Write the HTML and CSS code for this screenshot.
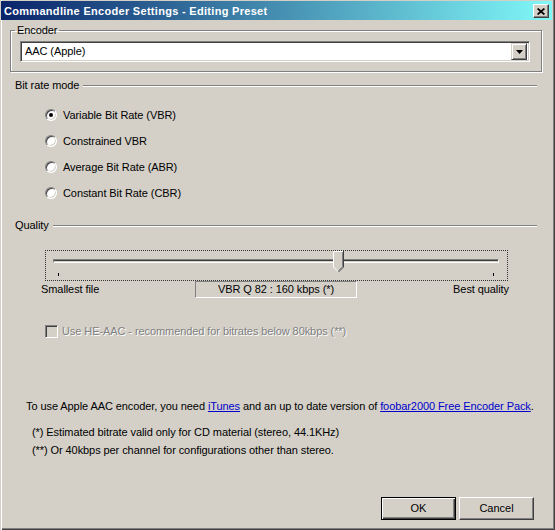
FILE: index.html
```html
<!DOCTYPE html>
<html>
<head>
<meta charset="utf-8">
<title>Commandline Encoder Settings</title>
<link rel="stylesheet" href="styles.css">
</head>
<body>
<div class="window">
  <div class="titlebar">
    <span class="title">Commandline Encoder Settings - Editing Preset</span>
    <span class="closebtn"><svg width="8" height="7" viewBox="0 0 8 7"><path d="M0.6 0.5 L7.4 6.5 M7.4 0.5 L0.6 6.5" stroke="#000" stroke-width="1.7" fill="none"/></svg></span>
  </div>

  <fieldset class="group">
    <legend>Encoder</legend>
    <div class="combo">
      <span class="combo-text">AAC (Apple)</span>
      <span class="combo-btn"><svg width="7" height="4" viewBox="0 0 7 4"><path d="M0 0H7L3.5 4Z" fill="#000"/></svg></span>
    </div>
  </fieldset>

  <div class="sect sect-bitrate"><span>Bit rate mode</span><i class="rule"></i></div>
  <div class="radios">
    <label class="radio"><span class="rb on"></span>Variable Bit Rate (VBR)</label>
    <label class="radio"><span class="rb"></span>Constrained VBR</label>
    <label class="radio"><span class="rb"></span>Average Bit Rate (ABR)</label>
    <label class="radio"><span class="rb"></span>Constant Bit Rate (CBR)</label>
  </div>

  <div class="sect sect-quality"><span>Quality</span><i class="rule"></i></div>
  <div class="slider">
    <div class="track"></div>
    <svg class="thumb" style="left:287px" width="11" height="22" viewBox="0 0 11 22">
      <path d="M0 0H11V16L5.5 21.5L0 16Z" fill="#d4d0c8"/>
      <path d="M0.5 16V0.5H10" stroke="#fff" fill="none"/>
      <path d="M0.5 16L5 20.5" stroke="#fff" fill="none"/>
      <path d="M10.5 0V16L5.5 21" stroke="#404040" fill="none"/>
      <path d="M9.5 1V15.6L5.5 19.6" stroke="#808080" fill="none"/>
    </svg>
    <i class="tick tick-min"></i>
    <i class="tick tick-max"></i>
  </div>
  <div class="slider-labels">
    <span>Smallest file</span>
    <span class="value">VBR Q 82 : 160 kbps (*)</span>
    <span class="right">Best quality</span>
  </div>

  <label class="check"><span class="cb"></span>Use HE-AAC - recommended for bitrates below 80kbps (**)</label>

  <p class="info">To use Apple AAC encoder, you need <a href="#">iTunes</a> and an up to date version of <a href="#">foobar2000 Free Encoder Pack</a>.</p>
  <p class="note note-1">(*) Estimated bitrate valid only for CD material (stereo, 44.1KHz)</p>
  <p class="note note-2">(**) Or 40kbps per channel for configurations other than stereo.</p>

  <div class="buttons">
    <button class="btn default">OK</button>
    <button class="btn">Cancel</button>
  </div>
</div>
</body>
</html>
```

FILE: styles.css
```css
html, body {
  margin: 0;
  padding: 0;
}
body {
  width: 555px;
  height: 530px;
  overflow: hidden;
  background: #d4d0c8;
  font-family: "Liberation Sans", Arial, sans-serif;
  font-size: 11px;
  line-height: 13px;
  letter-spacing: -0.08px;
  color: #000;
}
.window {
  box-sizing: border-box;
  width: 555px;
  height: 530px;
  overflow: hidden;
  background: #d4d0c8;
  padding-top: 1px;
  box-shadow: inset 1px 0 #d4d0c8, inset 2px 0 #fff, inset -1px -1px #404040, inset -2px -2px #808080;
}

/* title bar */
.titlebar {
  height: 19px;
  margin: 0 3px 0 1px;
  padding: 1px 3px 0 3px;
  box-sizing: border-box;
  display: flex;
  align-items: center;
  justify-content: space-between;
  background: linear-gradient(to right, #0a246a, #80f8f8);
}
.title {
  color: #fff;
  font-weight: bold;
  font-size: 11px;
  letter-spacing: 0.3px;
  white-space: nowrap;
}
.closebtn {
  box-sizing: border-box;
  width: 16px;
  height: 14px;
  display: flex;
  align-items: center;
  justify-content: center;
  background: #d4d0c8;
  border: 1px solid;
  border-color: #fff #404040 #404040 #fff;
  box-shadow: inset -1px -1px #808080;
}

/* encoder group */
.group {
  box-sizing: border-box;
  width: 532px;
  margin: 4px 0 0 10px;
  padding: 4px 11px 9px 9px;
  border: 1px solid #808080;
  box-shadow: inset 1px 1px #fff, 1px 1px #fff;
  min-width: 0;
}
.group legend {
  padding: 0 2px;
  margin-left: -5px;
  line-height: 13px;
}
.combo {
  box-sizing: border-box;
  height: 21px;
  display: flex;
  align-items: center;
  justify-content: space-between;
  background: #fff;
  border: 1px solid;
  border-color: #808080 #fff #fff #808080;
  box-shadow: inset 1px 1px #404040, inset -1px -1px #d4d0c8;
  padding: 0 2px 0 4px;
}
.combo-btn {
  box-sizing: border-box;
  width: 16px;
  height: 17px;
  display: flex;
  align-items: center;
  justify-content: center;
  background: #d4d0c8;
  border: 1px solid;
  border-color: #d4d0c8 #404040 #404040 #d4d0c8;
  box-shadow: inset 1px 1px #fff, inset -1px -1px #808080;
}

/* section separators */
.sect {
  display: flex;
  align-items: center;
  height: 13px;
  margin: 0 18px 0 15px;
}
.sect-bitrate { margin-top: 7px; }
.sect-quality { margin-top: 13px; }
.rule {
  flex: 1;
  height: 0;
  margin-left: 4px;
  border-top: 1px solid #808080;
  border-bottom: 1px solid #fff;
}

/* radios */
.radios {
  margin: 10px 0 0 45px;
}
.radio {
  display: flex;
  align-items: center;
  gap: 6px;
  height: 26px;
}
.rb {
  box-sizing: border-box;
  width: 12px;
  height: 12px;
  border-radius: 50%;
  background: #fff;
  border: 1px solid;
  border-color: #808080 #fff #fff #808080;
  box-shadow: inset 1px 1px #404040, inset -1px -1px #d4d0c8;
  display: flex;
  align-items: center;
  justify-content: center;
}
.rb.on::after {
  content: "";
  width: 4px;
  height: 4px;
  border-radius: 50%;
  background: #000;
}

/* slider */
.slider {
  position: relative;
  box-sizing: border-box;
  width: 463px;
  height: 31px;
  margin: 18px 0 0 45px;
  border: 1px dotted #333;
}
.track {
  box-sizing: border-box;
  width: 446px;
  height: 4px;
  margin: 8px 0 0 7px;
  border: 1px solid;
  border-color: #808080 #fff #fff #808080;
  box-shadow: inset 0 1px #404040;
  background: #d4d0c8;
}
.thumb {
  position: absolute;
  top: 0;
}
.tick {
  position: absolute;
  top: 22px;
  width: 1px;
  height: 3px;
  background: #000;
}
.tick-min { left: 12px; }
.tick-max { left: 447px; }

.slider-labels {
  width: 468px;
  height: 17px;
  margin-left: 41px;
  display: grid;
  grid-template-columns: 154px 162px 1fr;
  align-items: center;
}
.slider-labels .value {
  box-sizing: border-box;
  height: 17px;
  line-height: 15px;
  text-align: center;
  border: 1px solid;
  border-color: #808080 #fff #fff #808080;
}
.slider-labels .right {
  text-align: right;
}

/* checkbox */
.check {
  display: flex;
  align-items: center;
  gap: 4px;
  height: 13px;
  margin: 27px 0 0 45px;
  color: #808080;
  text-shadow: 1px 1px #fff;
}
.cb {
  box-sizing: border-box;
  width: 13px;
  height: 13px;
  background: #d4d0c8;
  border: 1px solid;
  border-color: #808080 #fff #fff #808080;
  box-shadow: inset 1px 1px #404040, inset -1px -1px #d4d0c8;
}

/* texts */
p {
  margin: 0;
}
.info {
  margin: 62px 0 0 26px;
}
.info a {
  color: #0000cc;
  text-decoration: underline;
}
.note {
  margin-left: 32px;
}
.note-1 { margin-top: 13px; }
.note-2 { margin-top: 5px; }

/* buttons */
.buttons {
  display: flex;
  justify-content: flex-end;
  gap: 3px;
  margin-top: 40px;
  padding-right: 21px;
}
.btn {
  box-sizing: border-box;
  width: 75px;
  height: 23px;
  padding: 0;
  font: inherit;
  color: #000;
  background: #d4d0c8;
  border: 1px solid;
  border-color: #fff #404040 #404040 #fff;
  box-shadow: inset -1px -1px #808080;
}
.btn.default {
  border-color: #000;
  box-shadow: inset 1px 1px #fff, inset -1px -1px #404040, inset -2px -2px #808080;
}
```
